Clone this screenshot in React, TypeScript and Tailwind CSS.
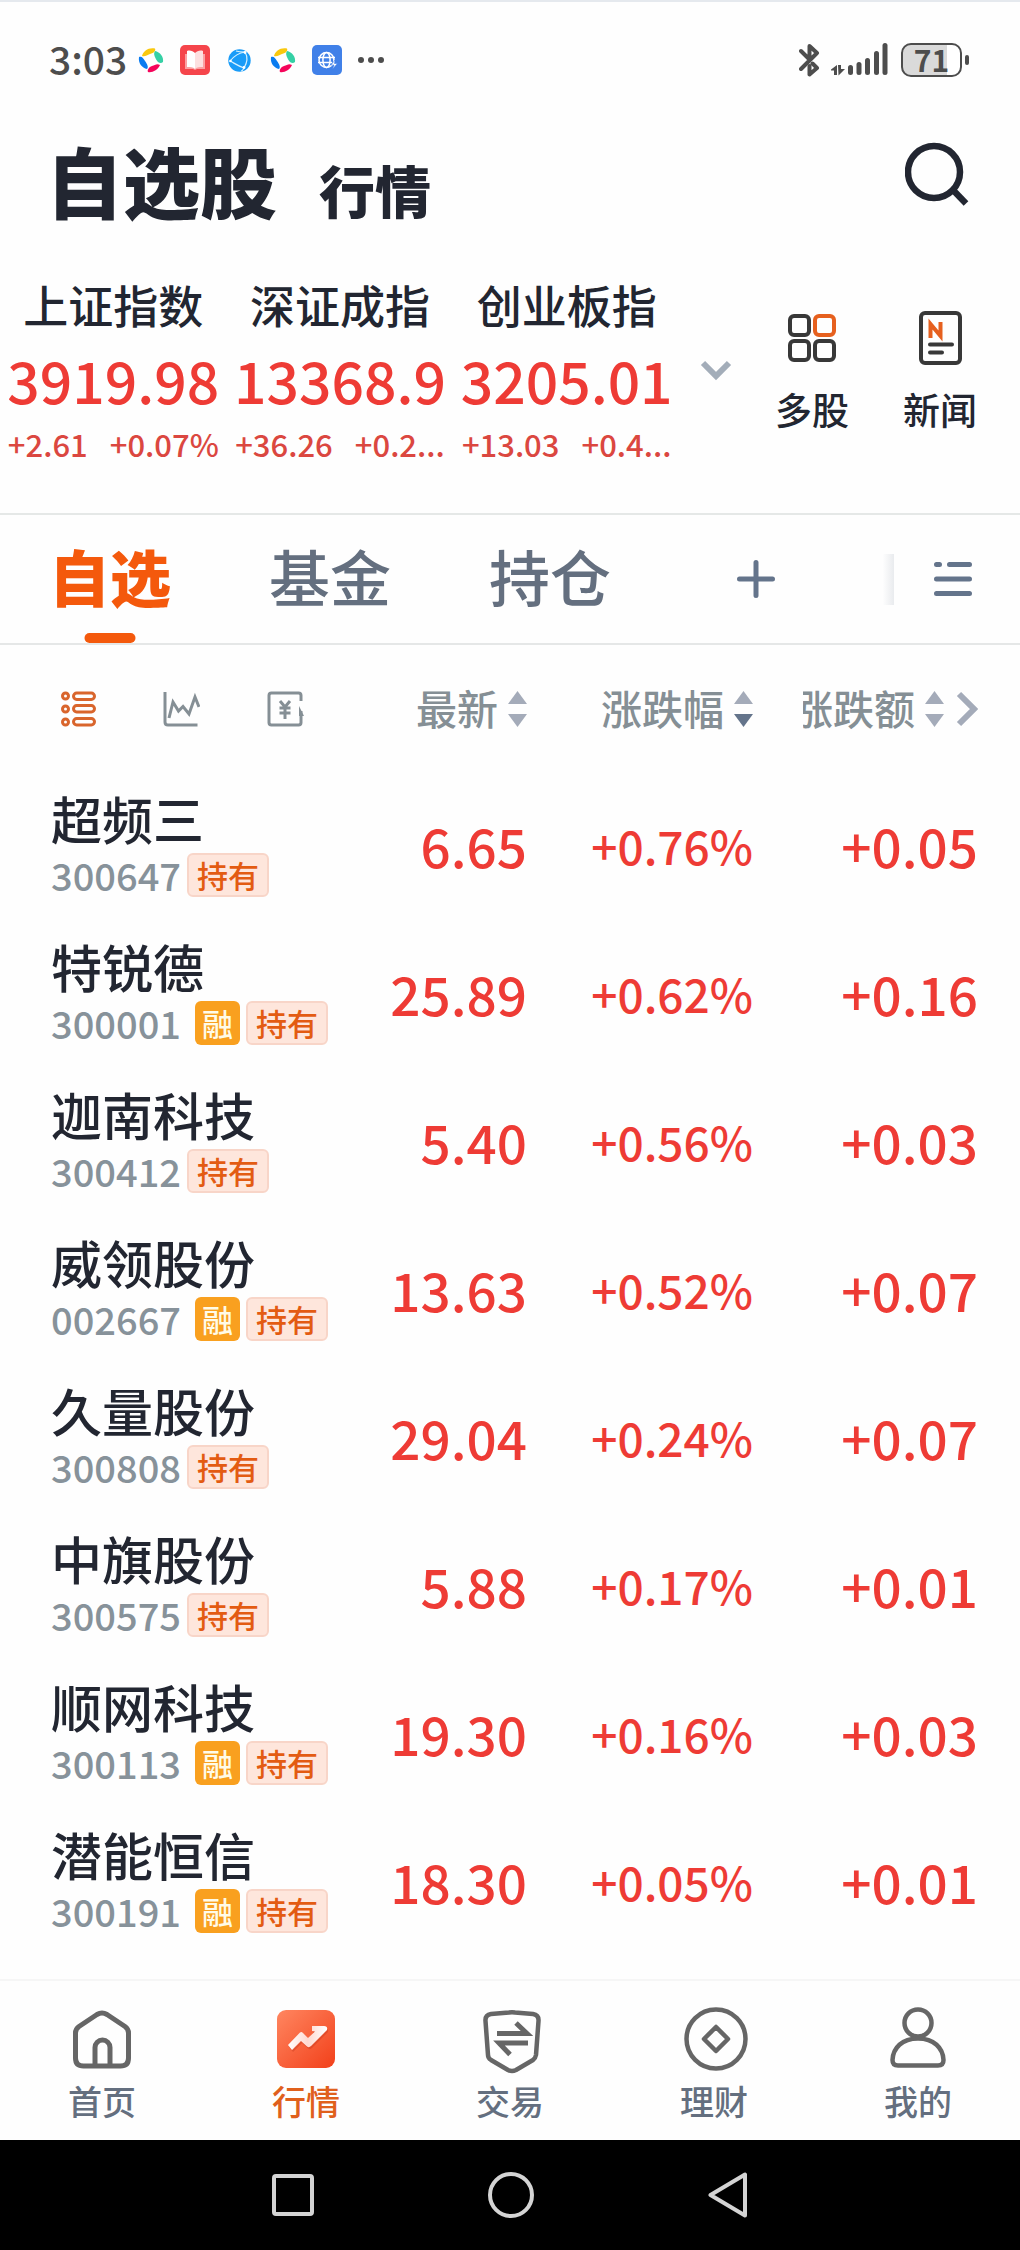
import { ReactNode } from "react";
import clsx from "clsx";

interface MarketIndex {
    name: string;
    value: string;
    change: string;
    percent: string;
}

interface Stock {
    name: string;
    code: string;
    margin?: boolean;
    price: string;
    percent: string;
    change: string;
}

const indices: MarketIndex[] = [
    { name: "上证指数", value: "3919.98", change: "+2.61", percent: "+0.07%" },
    { name: "深证成指", value: "13368.9", change: "+36.26", percent: "+0.2..." },
    { name: "创业板指", value: "3205.01", change: "+13.03", percent: "+0.4..." },
];

const stocks: Stock[] = [
    { name: "超频三", code: "300647", price: "6.65", percent: "+0.76%", change: "+0.05" },
    { name: "特锐德", code: "300001", margin: true, price: "25.89", percent: "+0.62%", change: "+0.16" },
    { name: "迦南科技", code: "300412", price: "5.40", percent: "+0.56%", change: "+0.03" },
    { name: "威领股份", code: "002667", margin: true, price: "13.63", percent: "+0.52%", change: "+0.07" },
    { name: "久量股份", code: "300808", price: "29.04", percent: "+0.24%", change: "+0.07" },
    { name: "中旗股份", code: "300575", price: "5.88", percent: "+0.17%", change: "+0.01" },
    { name: "顺网科技", code: "300113", margin: true, price: "19.30", percent: "+0.16%", change: "+0.03" },
    { name: "潜能恒信", code: "300191", margin: true, price: "18.30", percent: "+0.05%", change: "+0.01" },
];

const SwirlIcon = () => (
    <svg className="h-[26px] w-[26px]" viewBox="0 0 26 26" aria-hidden="true">
        <path d="M4 9C5 4 11 0 17 1.500C18 4 16 6 12 7C9 8 7 10 4 9Z" fill="#f9c80e" />
        <path d="M17 4C22 5 26 10 25 15C23 17 20 16 18.500 13C17 10 15 7 17 4Z" fill="#35d0a5" />
        <path d="M22 18C20 23 14 26 10 25C9 23 11 20 14 19C17 18 19 16 22 18Z" fill="#f5055a" />
        <path d="M1 10C4 9 5 11 7 14C9 17 11 20 9 22C4 21 0 16 1 10Z" fill="#0a7cf0" />
    </svg>
);

const BookIcon = () => (
    <svg className="h-[30px] w-[30px]" viewBox="0 0 30 30" aria-hidden="true">
        <rect width="30" height="30" rx="5" fill="#f5454b" />
        <path d="M5 9H25V24H17L15 25L13 24H5Z" fill="#fba0a2" />
        <path d="M7 6C10 5 13 6 15 8V24C13 22 10 22 7 22Z" fill="#fff" />
        <path d="M23 6C20 5 17 6 15 8V24C17 22 20 22 23 22Z" fill="#fde0e0" />
    </svg>
);

const OrbIcon = () => (
    <svg className="h-[23px] w-[23px]" viewBox="0 0 23 23" aria-hidden="true">
        <circle cx="11.500" cy="11.500" r="11.200" fill="#1a9cf8" />
        <g fill="none" stroke="#d6f1ff" strokeWidth="1.200">
            <path d="M17 3C10 4 6 7 2 12C6 14 10 17 16 19" />
            <path d="M8 2C11 3 14 3 17 3C20 8 19 14 16 19C15 21 14 22 13 22" />
        </g>
        <g fill="#fff">
            <circle cx="17" cy="3.500" r="1.400" />
            <circle cx="2.500" cy="12" r="1.300" />
            <circle cx="16" cy="18.500" r="1.400" />
        </g>
    </svg>
);

const GlobeIcon = () => (
    <svg className="h-[30px] w-[30px]" viewBox="0 0 30 30" aria-hidden="true">
        <rect width="30" height="30" rx="5" fill="#4080e8" />
        <g fill="none" stroke="#fff" strokeWidth="1.500">
            <circle cx="14.500" cy="15" r="7.500" />
            <ellipse cx="14.500" cy="15" rx="3.600" ry="7.500" />
            <path d="M6 12.500H23M6 17.500H20" />
        </g>
        <path d="M23 15L19 20H22L20.500 24L25.500 18.500H22.500Z" fill="#fff" stroke="#4080e8" strokeWidth=".6" />
    </svg>
);

const StatusRight = () => (
    <div className="flex items-center">
        <svg className="h-[34px] w-[90px]" viewBox="0 0 90 34" aria-hidden="true">
            <g fill="none" stroke="#4d4d4d" strokeWidth="4" strokeLinecap="round" strokeLinejoin="round">
                <path d="M2 8L10.500 16.500V3L18 10L2 26" />
                <path d="M13.500 20.500L18 25L10.500 31.500V23" />
            </g>
            <g fill="#4d4d4d">
                <path d="M32 26.500L38 22V32H35V27.500H32ZM39 22H42V26H46L39.500 32.500Z" />
                <rect x="49" y="22" width="5" height="10" rx="2.500" />
                <rect x="57.500" y="19" width="5" height="13" rx="2.500" />
                <rect x="66" y="15" width="5" height="17" rx="2.500" />
                <rect x="75" y="8" width="5" height="24" rx="2.500" />
                <rect x="83.500" y="0" width="5" height="32" rx="2.500" />
            </g>
        </svg>
        <div className="ml-3 flex h-[34px] w-[61px] items-center justify-center rounded-[10px] border-2 border-[#4d4d4d] bg-linear-to-r from-[#dadada] from-78% to-white to-78% pb-0.5 text-[30px] leading-none font-bold">
            71
        </div>
        <span className="ml-[3px] h-[10px] w-1 rounded-sm bg-[#4d4d4d]" />
    </div>
);

const SortArrows = ({ active }: { active?: boolean }) => (
    <svg className="h-9 w-[19px] shrink-0" viewBox="0 0 19 36" aria-hidden="true">
        <path d="M9.500 0L19 13H0Z" fill="#a4abb9" />
        <path d="M9.500 36L19 23H0Z" fill={active ? "#64748b" : "#a4abb9"} />
    </svg>
);

const Tag = ({ children, solid }: { children: ReactNode; solid?: boolean }) => (
    <span
        className={clsx(
            "flex h-11 items-center justify-center rounded-md pb-0.5 text-[31px] leading-none",
            solid ? "w-[45px] bg-[#f9a01f] text-[#fffbe8]" : "w-[82px] border-2 border-[#f8d5c8] bg-[#fee6dc] text-[#e35b12]"
        )}
    >
        {children}
    </span>
);

const StockRow = ({ stock }: { stock: Stock }) => (
    <tr className="h-[148px] text-right text-[53px] leading-none text-[#ee3b35]">
        <th scope="row" className="pb-[3px] pl-[51px] text-left font-medium">
            <p className="text-[51px] leading-[57px] whitespace-nowrap text-[#222631]">{stock.name}</p>
            <div className="flex h-[57px] items-center gap-1.5">
                <span className={clsx("text-[38px] text-[#87929a]", stock.margin && "mr-2")}>{stock.code}</span>
                {stock.margin && <Tag solid>融</Tag>}
                <Tag>持有</Tag>
            </div>
        </th>
        <td className="pb-1.5">{stock.price}</td>
        <td className="pb-1.5 text-[46px]">{stock.percent}</td>
        <td className="pr-[42px] pb-1.5">{stock.change}</td>
    </tr>
);

const navItems: { label: string; active?: boolean; icon: ReactNode }[] = [
    {
        label: "首页",
        icon: (
            <g fill="none" stroke="#666" strokeWidth="5" strokeLinejoin="round">
                <path d="M5.500 26Q5.500 22 9 19.500L27 7.500Q32 4.500 37 7.500L55 19.500Q58.500 22 58.500 26V51Q58.500 59 50.500 59H13.500Q5.500 59 5.500 51Z" />
                <path d="M25 59V40.500A7.500 7.500 0 0 1 40 40.500V59" />
            </g>
        ),
    },
    {
        label: "行情",
        active: true,
        icon: (
            <>
                <defs>
                    <linearGradient id="quoteFill" x1="0" y1="0" x2="1" y2="1">
                        <stop offset="0" stopColor="#ff8660" />
                        <stop offset="1" stopColor="#f2401a" />
                    </linearGradient>
                    <linearGradient id="quoteArrow" x1="0" y1="0" x2="1" y2="0">
                        <stop offset="0" stopColor="#fff" />
                        <stop offset=".5" stopColor="#ffd9d0" />
                        <stop offset="1" stopColor="#fff" />
                    </linearGradient>
                </defs>
                <rect x="3" y="3" width="58" height="58" rx="9" fill="url(#quoteFill)" />
                <path d="M14 38L26 25.500Q27.500 24.500 29 26L34 31L41 24.500L38 24V19H50Q54 19 53 23L37 39Q35 41 33 39.500L27 34L18 43Z" fill="#b52c10" opacity=".3" transform="translate(1 2)" />
                <path d="M14 38L26 25.500Q27.500 24.500 29 26L34 31L41 24.500L38 24V19H50Q54 19 53 23L37 39Q35 41 33 39.500L27 34L18 43Z" fill="url(#quoteArrow)" />
            </>
        ),
    },
    {
        label: "交易",
        icon: (
            <g fill="none" stroke="#666" strokeWidth="4.500" strokeLinejoin="round">
                <path d="M13 7L31 5.500Q34 5 37 5.500L55 7Q61 8 60.500 14L58 48Q57.500 51 55 53L38 63Q34 65 30 63L13 53Q10 51 10 48L7.500 14Q7 8 13 7Z" />
                <path d="M19 26.500H49L38 16M50 36H21L32 47.500" strokeWidth="5" strokeLinejoin="miter" />
            </g>
        ),
    },
    {
        label: "理财",
        icon: (
            <g fill="none" stroke="#666" strokeWidth="4.500" strokeLinejoin="round">
                <circle cx="34" cy="32" r="29.500" />
                <path d="M34 20L46 32L34 44L22 32Z" />
            </g>
        ),
    },
    {
        label: "我的",
        icon: (
            <g fill="none" stroke="#666" strokeWidth="4.500" strokeLinejoin="round">
                <circle cx="32" cy="16" r="13.500" />
                <path d="M32 31.500C16 31.500 7 41 6.500 53Q6.500 58.500 12 58.500H52Q57.500 58.500 57.500 53C57 41 48 31.500 32 31.500Z" />
            </g>
        ),
    },
];

export default function App() {
    return (
        <div className="flex min-h-screen flex-col border-t-2 border-[#e5e9ee] bg-[#fefefe] font-['Noto_Sans_CJK_SC',sans-serif] font-medium text-[#222631]">
            <div className="flex h-[116px] items-center justify-between pr-[51px] pl-[49px] text-[#4d4d4d]">
                <div className="flex items-center">
                    <span className="w-20 pb-1 text-[39px] leading-none">3:03</span>
                    <span className="flex w-11 justify-center"><SwirlIcon /></span>
                    <span className="flex w-11 justify-center"><BookIcon /></span>
                    <span className="flex w-11 justify-center"><OrbIcon /></span>
                    <span className="flex w-11 justify-center"><SwirlIcon /></span>
                    <span className="flex w-11 justify-center"><GlobeIcon /></span>
                    <span className="flex w-11 justify-center gap-1">
                        <i className="size-1.5 rounded-full bg-[#4d4d4d]" />
                        <i className="size-1.5 rounded-full bg-[#4d4d4d]" />
                        <i className="size-1.5 rounded-full bg-[#4d4d4d]" />
                    </span>
                </div>
                <StatusRight />
            </div>

            <header className="flex h-[150px] items-center justify-between pr-[51px] pb-7 pl-[46px]">
                <h1 className="flex items-baseline gap-[42px] leading-none font-black">
                    <span className="text-[77px]">自选股</span>
                    <a href="#quotes" className="text-[56px]">行情</a>
                </h1>
                <button type="button" aria-label="搜索" className="pb-2.5">
                    <svg className="h-16 w-16" viewBox="0 0 64 64" fill="none" stroke="#222631" strokeWidth="6.500">
                        <circle cx="29" cy="30" r="26" />
                        <path d="M48 48L61 61.500" />
                    </svg>
                </button>
            </header>

            <section className="flex h-[247px] items-start border-b-2 border-[#e5e8e7]">
                <div className="grid flex-2 grid-cols-3">
                    {indices.map((item) => (
                        <div key={item.name} className="flex flex-col items-center whitespace-nowrap">
                            <p className="text-[45px] leading-[74px]">{item.name}</p>
                            <p className="text-[57px] leading-[74px] text-[#ee3b35]">{item.value}</p>
                            <p className="flex gap-[22px] text-[31px] leading-[56px] text-[#db4740]">
                                <span>{item.change}</span>
                                <span>{item.percent}</span>
                            </p>
                        </div>
                    ))}
                </div>
                <div className="flex flex-1 items-start pt-9">
                    <button type="button" aria-label="展开指数" className="mt-[55px] ml-5">
                        <svg className="h-[22px] w-8" viewBox="0 0 32 22" fill="none" stroke="#a3adb9" strokeWidth="6">
                            <path d="M3 4L16 17L29 4" />
                        </svg>
                    </button>
                    <div className="flex flex-1 justify-end gap-[54px] pr-[43px]">
                        <a href="#multi" className="flex flex-col items-center">
                            <svg className="h-[62px] w-14" viewBox="0 0 56 62" fill="none" stroke="#383838" strokeWidth="4">
                                <rect x="6" y="12" width="19" height="19" rx="4" />
                                <rect x="31" y="12" width="19" height="19" rx="4" stroke="#e6601e" />
                                <rect x="6" y="37" width="19" height="19" rx="4" />
                                <rect x="31" y="37" width="19" height="19" rx="4" />
                            </svg>
                            <span className="mt-4 text-[37px] leading-[54px]">多股</span>
                        </a>
                        <a href="#news" className="flex flex-col items-center">
                            <svg className="h-[62px] w-14" viewBox="0 0 56 62" fill="none">
                                <rect x="9" y="9" width="39" height="50" rx="4" stroke="#383838" strokeWidth="4" />
                                <path d="M18.500 34V20L28.500 32V18" stroke="#e6601e" strokeWidth="4" />
                                <path d="M18 40.500H40M18 48.500H30" stroke="#383838" strokeWidth="4" strokeLinecap="round" />
                            </svg>
                            <span className="mt-4 text-[37px] leading-[54px]">新闻</span>
                        </a>
                    </div>
                </div>
            </section>

            <nav className="flex h-[130px] items-stretch justify-between border-b-2 border-[#e5e7e7] pr-12 pl-[49px] text-[61px] text-[#646f7f]">
                <div className="flex gap-[98px]">
                    <button type="button" className="relative pb-1.5 font-black text-[#f4590c]">
                        自选
                        <span className="absolute bottom-0 left-1/2 h-2.5 w-[51px] -translate-x-1/2 rounded-full bg-[#f4590c]" />
                    </button>
                    <button type="button" className="pb-1.5">基金</button>
                    <button type="button" className="pb-1.5">持仓</button>
                </div>
                <div className="flex items-center">
                    <button type="button" aria-label="添加分组" className="mr-[107px]">
                        <svg className="size-[38px]" viewBox="0 0 38 38" stroke="#64748b" strokeWidth="5" strokeLinecap="round">
                            <path d="M19 2.500V35.500M2.500 19H35.500" />
                        </svg>
                    </button>
                    <span className="mr-10 h-[51px] w-3 bg-linear-to-r from-white to-[#e9ebee]" />
                    <button type="button" aria-label="分组列表">
                        <svg className="size-[38px]" viewBox="0 0 38 38" stroke="#64748b" strokeWidth="5" strokeLinecap="round">
                            <path d="M2.500 4.500H5.500M15.500 4.500H35.500M2.500 19H35.500M2.500 33.500H35.500" />
                        </svg>
                    </button>
                </div>
            </nav>

            <table className="w-full table-fixed">
                <colgroup>
                    <col />
                    <col className="w-[190px]" />
                    <col className="w-[226px]" />
                    <col className="w-[267px]" />
                </colgroup>
                <thead className="text-[41px] leading-none text-[#858f95]">
                    <tr className="h-[129px]">
                        <th scope="col" className="pb-0.5 pl-[61px] font-medium">
                            <div className="flex items-center gap-[67px]">
                                <button type="button" aria-label="列表">
                                    <svg className="h-9 w-[35px]" viewBox="0 0 35 36" fill="none" stroke="#d9652c" strokeWidth="3">
                                        <circle cx="4.500" cy="5" r="3" />
                                        <circle cx="4.500" cy="18" r="3" />
                                        <circle cx="4.500" cy="31" r="3" />
                                        <rect x="12.500" y="2" width="21" height="6.500" rx="3.200" />
                                        <rect x="12.500" y="14.500" width="21" height="6.500" rx="3.200" />
                                        <rect x="12.500" y="27.500" width="21" height="6.500" rx="3.200" />
                                    </svg>
                                </button>
                                <button type="button" aria-label="走势">
                                    <svg className="h-9 w-[37px]" viewBox="0 0 37 36" fill="none" stroke="#858f95" strokeWidth="3">
                                        <path d="M2 1V31Q2 34 5 34H34.500" />
                                        <path d="M6 27L10 11L15.500 20L20 15.500L26 23L32 6L36 16" />
                                    </svg>
                                </button>
                                <button type="button" aria-label="资金">
                                    <svg className="h-9 w-[37px]" viewBox="0 0 37 36" fill="none" stroke="#858f95" strokeWidth="3">
                                        <path d="M34 10V4.500Q34 2 31.500 2H4.500Q2 2 2 4.500V31.500Q2 34 4.500 34H31.500Q34 34 34 31.500V20" />
                                        <path d="M32 15V25H37Z" fill="#858f95" stroke="none" />
                                        <path d="M13 10L18 16L23 10M18 16V28M12.500 17H23.500M12.500 22H23.500" />
                                    </svg>
                                </button>
                            </div>
                        </th>
                        <th scope="col" className="pb-0.5 font-medium">
                            <button type="button" className="ml-auto flex items-center gap-2.5 whitespace-nowrap">
                                <span className="pb-0.5">最新</span>
                                <SortArrows />
                            </button>
                        </th>
                        <th scope="col" className="pb-0.5 font-medium">
                            <button type="button" className="ml-auto flex items-center gap-2.5 whitespace-nowrap">
                                <span className="pb-0.5">涨跌幅</span>
                                <SortArrows active />
                            </button>
                        </th>
                        <th scope="col" className="pr-[42px] pb-0.5 font-medium">
                            <div className="flex items-center justify-end gap-3">
                                <button type="button" className="flex items-center gap-2.5 whitespace-nowrap">
                                    <span className="flex w-28 justify-end overflow-hidden pb-0.5">涨跌额</span>
                                    <SortArrows />
                                </button>
                                <svg className="h-9 w-[22px]" viewBox="0 0 22 36" fill="none" stroke="#a4abb9" strokeWidth="6" aria-hidden="true">
                                    <path d="M3 3L18 18L3 33" />
                                </svg>
                            </div>
                        </th>
                    </tr>
                </thead>
                <tbody>
                    {stocks.map((stock) => (
                        <StockRow key={stock.code} stock={stock} />
                    ))}
                </tbody>
            </table>

            <div className="mt-auto">
                <nav className="grid h-[161px] grid-cols-5 border-t-2 border-[#f6f6f6] pt-[26px]">
                    {navItems.map((item) => (
                        <a key={item.label} href="#" className="flex flex-col items-center gap-2">
                            <svg className="h-[66px] w-16 overflow-visible" viewBox="0 0 64 66" aria-hidden="true">
                                {item.icon}
                            </svg>
                            <span className={clsx("text-[34px] leading-10", item.active ? "text-[#e0601c]" : "text-[#646f7f]")}>
                                {item.label}
                            </span>
                        </a>
                    ))}
                </nav>
                <div className="flex h-[110px] items-center justify-center gap-[174px] bg-black">
                    <button type="button" aria-label="最近任务">
                        <svg className="size-[42px]" viewBox="0 0 42 42" fill="none" stroke="#d4d4d4" strokeWidth="4">
                            <rect x="2" y="2" width="38" height="38" rx="2" />
                        </svg>
                    </button>
                    <button type="button" aria-label="主屏幕">
                        <svg className="size-[46px]" viewBox="0 0 46 46" fill="none" stroke="#d4d4d4" strokeWidth="4">
                            <circle cx="23" cy="23" r="21" />
                        </svg>
                    </button>
                    <button type="button" aria-label="返回">
                        <svg className="h-[46px] w-10" viewBox="0 0 40 46" fill="none" stroke="#d4d4d4" strokeWidth="4" strokeLinejoin="round">
                            <path d="M37 2.500V43.500L2.500 23Z" />
                        </svg>
                    </button>
                </div>
            </div>
        </div>
    );
}
